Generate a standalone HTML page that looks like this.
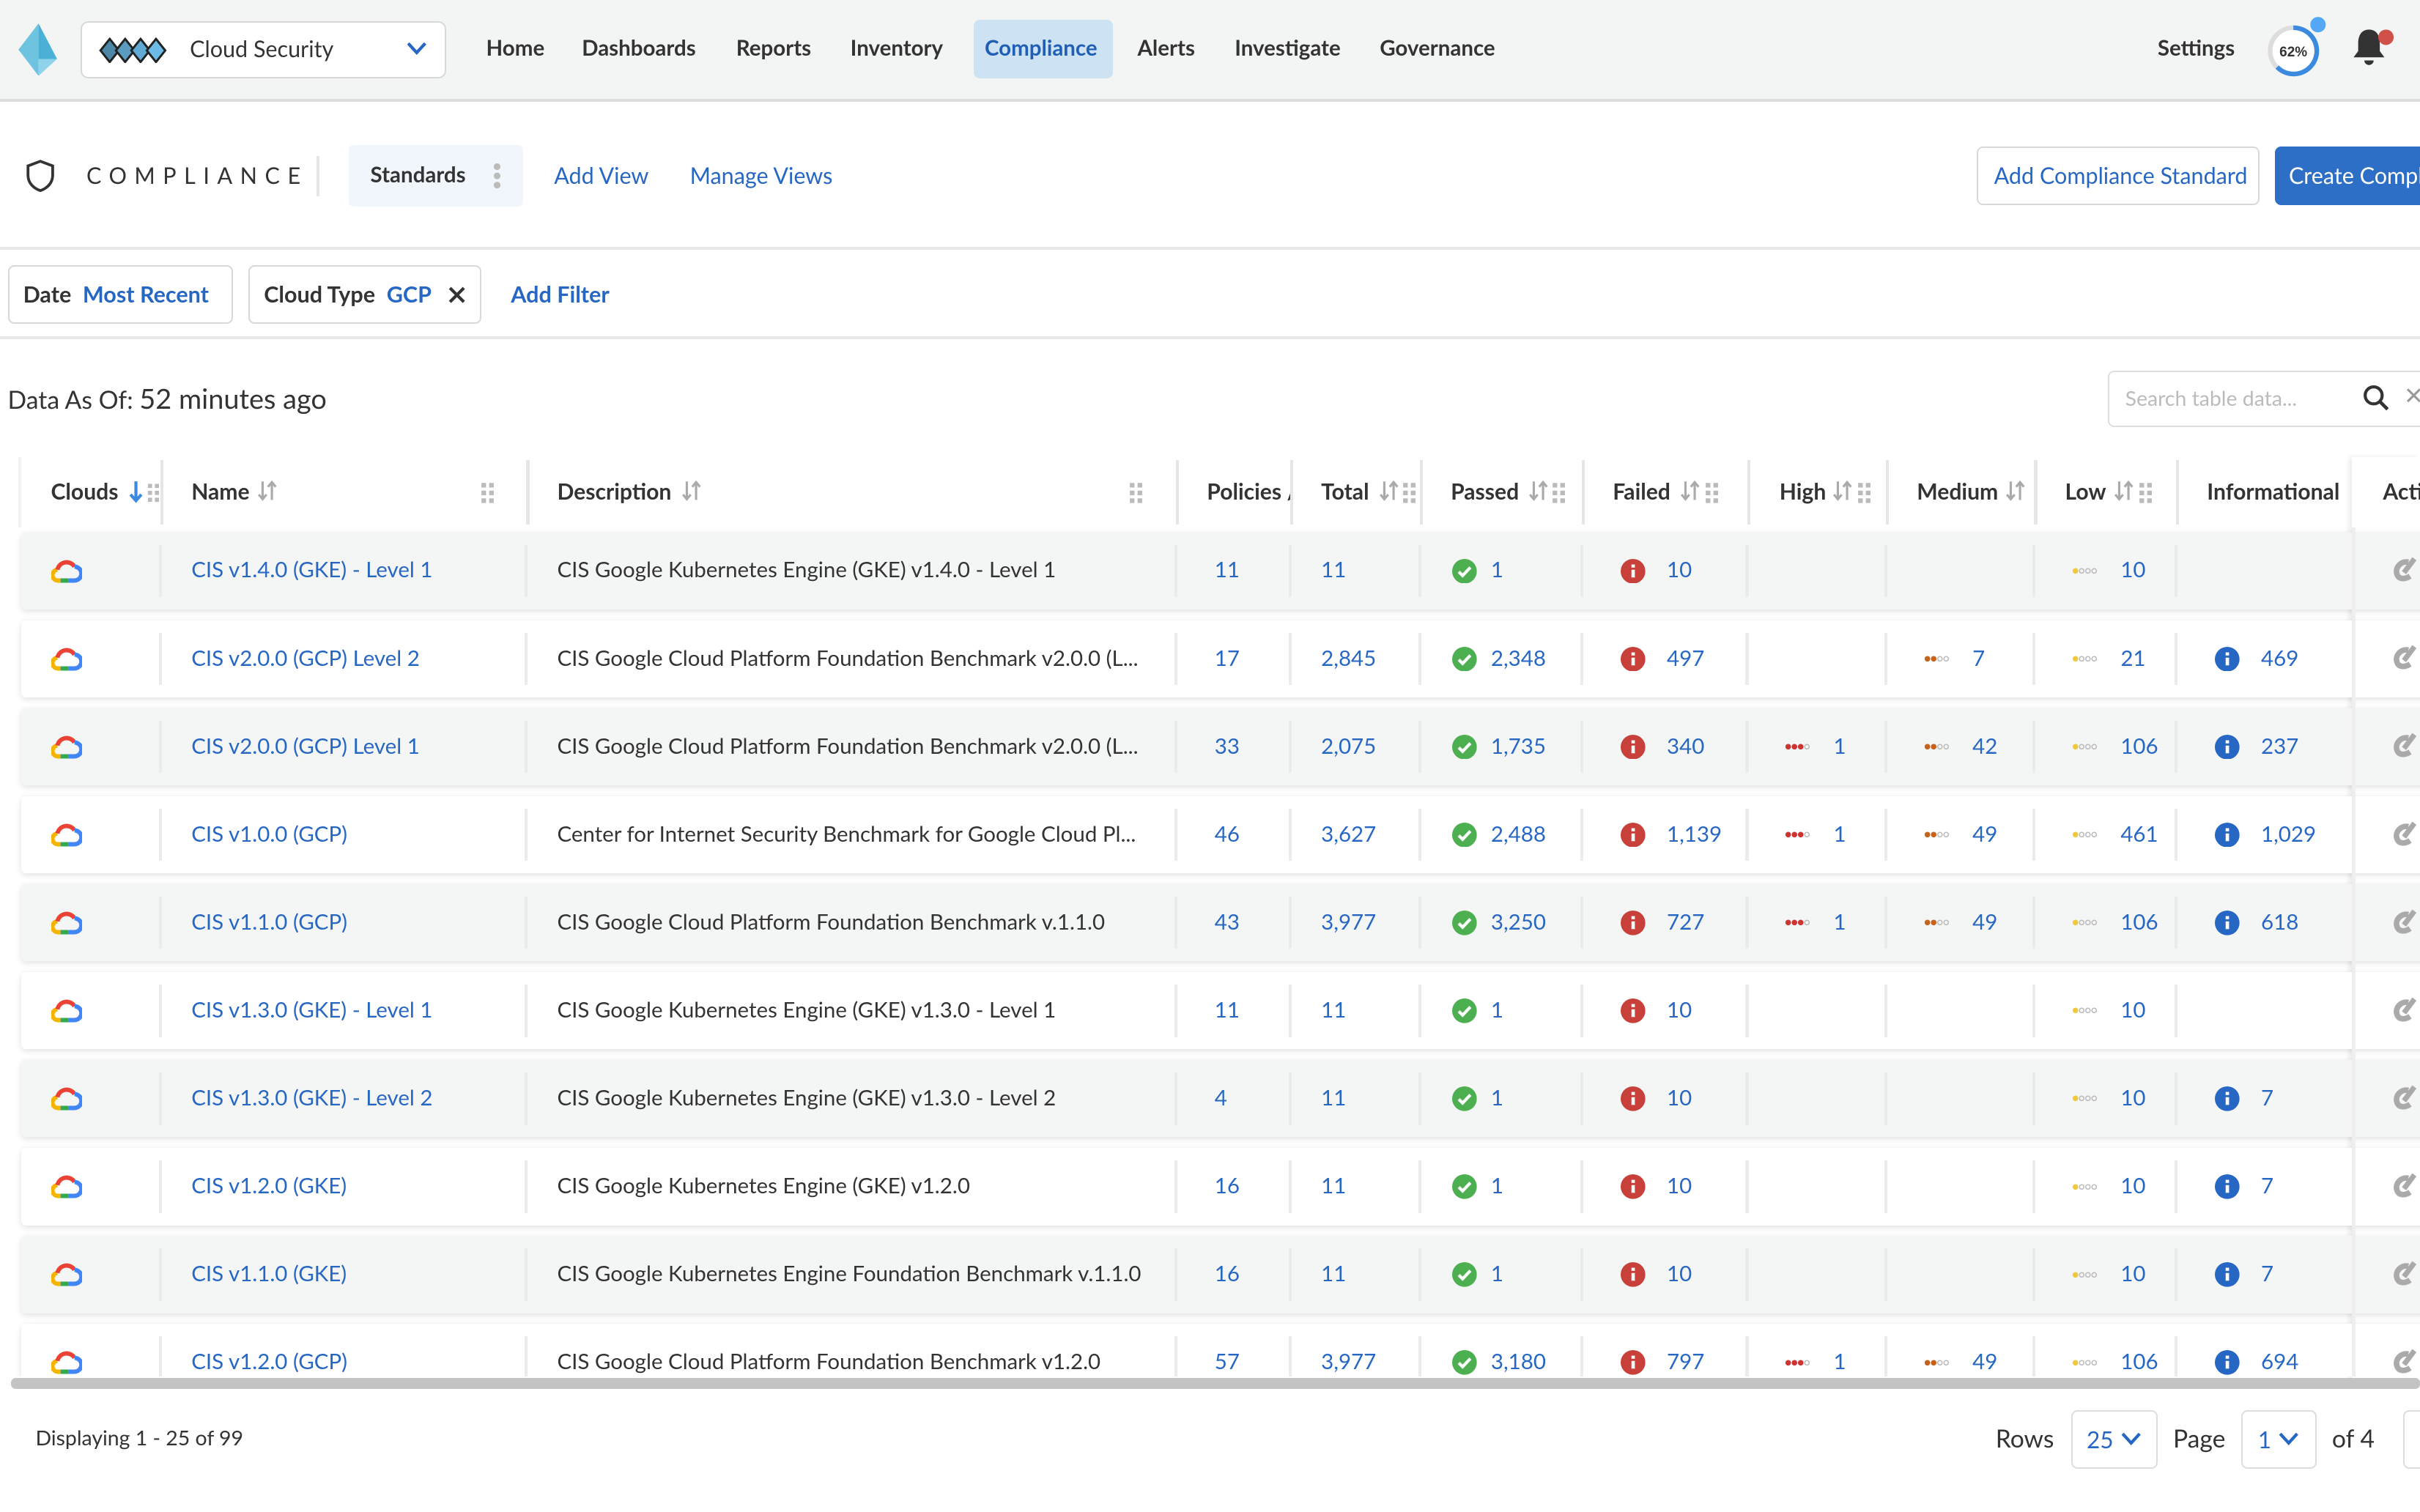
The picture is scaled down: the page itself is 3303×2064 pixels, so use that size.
<!DOCTYPE html>
<html><head><meta charset="utf-8">
<style>
*{box-sizing:border-box;margin:0;padding:0}
html,body{width:3303px;height:2064px;overflow:hidden;background:#fff}
#w{position:absolute;left:0;top:0;width:1568px;height:980px;zoom:2.1065;font-family:"Lato","Liberation Sans",sans-serif;color:#333;font-size:13.5px;overflow:hidden}
.a{position:absolute;white-space:nowrap}
.top{position:absolute;left:0;top:0;width:1568px;height:66px;background:#f3f4f4;border-bottom:2px solid #dcdcdc}
.nav{position:absolute;top:23px;font-weight:bold;font-size:14px;color:#333}
.blue{color:#2767c4}
.row{position:absolute;left:14px;width:1560px;height:50px;box-shadow:0 1px 4px rgba(0,0,0,.12);border-radius:3px;font-size:14px}
.g{background:#f4f5f5}.wh{background:#fff}
.row .a{top:16px}
.sep{position:absolute;top:8px;width:2px;height:34px;background:#ebebeb}
.hd{position:absolute;top:310px;font-weight:bold;font-size:14.3px;color:#333;white-space:nowrap}
.hs{position:absolute;top:298px;width:2px;height:42px;background:#e6e6e6}
svg.i{position:absolute}
</style></head><body><div id="w">
<svg width="0" height="0" style="position:absolute">
<defs>
<symbol id="gc" viewBox="0 0 20 16"><path d="M6 14H4.5A3.5 3.5 0 0 1 4 7" fill="none" stroke="#f4b400" stroke-width="2.8"/><path d="M4 7A6 6 0 0 1 15 5" fill="none" stroke="#ea4335" stroke-width="2.8"/><path d="M15 5A4.5 4.5 0 0 1 15 14H11" fill="none" stroke="#4285f4" stroke-width="2.8"/><path d="M11 14H6" fill="none" stroke="#34a853" stroke-width="2.8"/></symbol>
<symbol id="ok" viewBox="0 0 16 16"><circle cx="8" cy="8" r="8" fill="#4caf50"/><path d="M4.3 8.3l2.5 2.5 5-5.3" fill="none" stroke="#fff" stroke-width="2"/></symbol>
<symbol id="fl" viewBox="0 0 16 16"><circle cx="8" cy="8" r="8" fill="#c8403a"/><rect x="7" y="7" width="2.2" height="5" fill="#fff"/><rect x="7" y="3.6" width="2.2" height="2" fill="#fff"/></symbol>
<symbol id="in" viewBox="0 0 16 16"><circle cx="8" cy="8" r="8" fill="#2767c4"/><rect x="7" y="7" width="2.2" height="5" fill="#fff"/><rect x="7" y="3.6" width="2.2" height="2" fill="#fff"/></symbol>
<symbol id="d3" viewBox="0 0 20 6"><circle cx="3" cy="3" r="2" fill="#c33"/><circle cx="7.5" cy="3" r="2" fill="#c33"/><circle cx="12" cy="3" r="2" fill="#c33"/><circle cx="16.5" cy="3" r="1.6" fill="none" stroke="#bbb" stroke-width=".8"/></symbol>
<symbol id="d2" viewBox="0 0 20 6"><circle cx="3" cy="3" r="2" fill="#c8621b"/><circle cx="7.5" cy="3" r="2" fill="#c8621b"/><circle cx="12" cy="3" r="1.6" fill="none" stroke="#bbb" stroke-width=".8"/><circle cx="16.5" cy="3" r="1.6" fill="none" stroke="#bbb" stroke-width=".8"/></symbol>
<symbol id="d1" viewBox="0 0 20 6"><circle cx="3" cy="3" r="2" fill="#f0c93a"/><circle cx="7.5" cy="3" r="1.6" fill="none" stroke="#bbb" stroke-width=".8"/><circle cx="12" cy="3" r="1.6" fill="none" stroke="#bbb" stroke-width=".8"/><circle cx="16.5" cy="3" r="1.6" fill="none" stroke="#bbb" stroke-width=".8"/></symbol>
<symbol id="ac" viewBox="0 0 16 16"><path d="M11 4C7 3 3 7 4.5 11c1 3 4.5 3 7.5 1" fill="none" stroke="#aaa" stroke-width="3.2"/><path d="M8.5 10l6-8" stroke="#aaa" stroke-width="3"/></symbol>
<symbol id="so" viewBox="0 0 14 16"><path d="M4 2v11M1.5 10.5L4 13.5 6.5 10.5" fill="none" stroke="#aaa" stroke-width="1.5"/><path d="M10 14V3M7.5 5.5L10 2.5 12.5 5.5" fill="none" stroke="#aaa" stroke-width="1.5"/></symbol>
<symbol id="gr" viewBox="0 0 10 16"><g fill="#bbb"><rect x="1" y="2" width="3" height="3"/><rect x="6" y="2" width="3" height="3"/><rect x="1" y="7" width="3" height="3"/><rect x="6" y="7" width="3" height="3"/><rect x="1" y="12" width="3" height="3"/><rect x="6" y="12" width="3" height="3"/></g></symbol>
</defs></svg>

<div class="top"></div>
<svg class="i" style="left:10px;top:15px" width="27" height="34" viewBox="0 0 27 34"><path d="M15 0L2 17l13 17z" fill="#6ec3e0"/><path d="M15 0l12 23H15z" fill="#4ab0d6"/><path d="M15 23h12l-12 11z" fill="#8fd3ea"/></svg>
<div class="a" style="left:52px;top:14px;width:237px;height:37px;background:#fff;border:1px solid #d8d8d8;border-radius:5px"></div>
<svg class="i" style="left:64px;top:24px" width="52" height="17" viewBox="0 0 52 17"><g stroke="#222" stroke-width="1.4"><path d="M7 1l6 7.5-6 7.5-6-7.5z" fill="#4c87a8"/><path d="M17 1l6 7.5-6 7.5-6-7.5z" fill="#5b9cc0"/><path d="M27 1l6 7.5-6 7.5-6-7.5z" fill="#62aad6"/><path d="M37 1l6 7.5-6 7.5-6-7.5z" fill="#6cbbe6"/></g></svg>
<div class="a" style="left:123px;top:23px;font-size:14.5px">Cloud Security</div>
<svg class="i" style="left:263px;top:26px" width="14" height="10" viewBox="0 0 14 10"><path d="M1.5 2l5.5 6 5.5-6" fill="none" stroke="#2767c4" stroke-width="2"/></svg>
<div class="nav" style="left:315px">Home</div>
<div class="nav" style="left:377px">Dashboards</div>
<div class="nav" style="left:477px">Reports</div>
<div class="nav" style="left:551px">Inventory</div>
<div class="a" style="left:631px;top:13px;width:90px;height:38px;background:#cde2f3;border-radius:4px"></div>
<div class="nav" style="left:638px;color:#1f5fb5">Compliance</div>
<div class="nav" style="left:737px">Alerts</div>
<div class="nav" style="left:800px">Investigate</div>
<div class="nav" style="left:894px">Governance</div>
<div class="nav" style="left:1398px">Settings</div>
<svg class="i" style="left:1466px;top:10px" width="46" height="42" viewBox="0 0 46 42"><circle cx="20" cy="23" r="15" fill="#fff" stroke="#ddd" stroke-width="3"/><path d="M20 8A15 15 0 1 1 9.5 33.5" fill="none" stroke="#3a8ae0" stroke-width="3"/><circle cx="36" cy="6" r="5" fill="#55a8f5"/><text x="20" y="26.5" font-size="9" font-weight="bold" text-anchor="middle" font-family="Liberation Sans,sans-serif" fill="#333">62%</text></svg>
<svg class="i" style="left:1522px;top:16px" width="32" height="30" viewBox="0 0 32 30"><path d="M13 3c-5 0-7 4-7 9v5l-3 4h20l-3-4v-5c0-5-2-9-7-9z" fill="#333"/><path d="M10 23a3 3 0 0 0 6 0z" fill="#333"/><circle cx="24" cy="8" r="5" fill="#d0504a"/></svg>

<svg class="i" style="left:16px;top:103px" width="20" height="22" viewBox="0 0 20 22"><path d="M10 1.5L2 4.5v6c0 5 3.5 8.5 8 10 4.5-1.5 8-5 8-10v-6z" fill="none" stroke="#333" stroke-width="1.8"/></svg>
<div class="a" style="left:56px;top:105px;font-size:14.5px;letter-spacing:5px">COMPLIANCE</div>
<div class="a" style="left:205px;top:101px;width:2px;height:26px;background:#e6e6e6"></div>
<div class="a" style="left:226px;top:94px;width:113px;height:40px;background:#f0f6fb;border-radius:3px"></div>
<div class="a" style="left:240px;top:105px;font-weight:bold;font-size:14px">Standards</div>
<div class="a" style="left:320px;top:106px;width:4px;height:4px;border-radius:2px;background:#bbb;box-shadow:0 6px 0 #bbb,0 12px 0 #bbb"></div>
<div class="a blue" style="left:359px;top:105px;font-size:14.5px">Add View</div>
<div class="a blue" style="left:447px;top:105px;font-size:14.5px">Manage Views</div>
<div class="a" style="left:1281px;top:95px;width:183px;height:38px;border:1px solid #d8d8d8;border-radius:4px;background:#fff"></div>
<div class="a blue" style="left:1292px;top:105px;font-size:14.5px">Add Compliance Standard</div>
<div class="a" style="left:1474px;top:95px;width:110px;height:38px;background:#2d6fc6;border-radius:4px"></div>
<div class="a" style="left:1483px;top:105px;font-size:14.5px;color:#fff">Create Compliance</div>
<div class="a" style="left:0;top:160px;width:1568px;height:2px;background:#e8e8e8"></div>

<div class="a" style="left:5px;top:172px;width:146px;height:38px;border:1px solid #d8d8d8;border-radius:4px"></div>
<div class="a" style="left:15px;top:182px;font-size:14.5px"><b>Date</b>&nbsp; <b class="blue">Most Recent</b></div>
<div class="a" style="left:161px;top:172px;width:151px;height:38px;border:1px solid #d8d8d8;border-radius:4px"></div>
<div class="a" style="left:171px;top:182px;font-size:14.5px"><b>Cloud Type</b>&nbsp; <b class="blue">GCP</b></div>
<svg class="i" style="left:290px;top:185px" width="12" height="12" viewBox="0 0 12 12"><path d="M1.5 1.5l9 9M10.5 1.5l-9 9" stroke="#333" stroke-width="2"/></svg>
<div class="a blue" style="left:331px;top:182px;font-size:14.5px;font-weight:bold">Add Filter</div>
<div class="a" style="left:0;top:218px;width:1568px;height:2px;background:#e8e8e8"></div>

<div class="a" style="left:5px;top:248px;font-size:16px">Data As Of: <span style="font-size:18px">52 minutes ago</span></div>
<div class="a" style="left:1366px;top:240px;width:210px;height:37px;border:1px solid #ddd;border-radius:4px"></div>
<div class="a" style="left:1377px;top:250px;font-size:13.5px;color:#bbb">Search table data...</div>
<svg class="i" style="left:1531px;top:249px" width="40" height="18" viewBox="0 0 40 18"><circle cx="7" cy="7" r="5.5" fill="none" stroke="#333" stroke-width="2"/><path d="M11 11l5 5" stroke="#333" stroke-width="2.2"/><path d="M29 3l8 8M37 3l-8 8" stroke="#999" stroke-width="1.5"/></svg>

<div class="a" style="left:12px;top:296px;width:2px;height:46px;background:#f2f2f2"></div>
<div class="hd" style="left:33px">Clouds</div>
<svg class="i" style="left:83px;top:311px" width="10" height="16" viewBox="0 0 10 16"><path d="M5 1v12M1.5 9.5L5 13.5 8.5 9.5" fill="none" stroke="#3a8ae0" stroke-width="2"/></svg>
<svg class="i" style="left:95px;top:311px" width="9" height="16"><use href="#gr"/></svg>
<div class="hs" style="left:104px"></div>
<div class="hd" style="left:124px">Name</div><svg class="i" style="left:166px;top:310px" width="14" height="16"><use href="#so"/></svg><svg class="i" style="left:311px;top:311px" width="10" height="16"><use href="#gr"/></svg>
<div class="hs" style="left:341px"></div>
<div class="hd" style="left:361px">Description</div><svg class="i" style="left:441px;top:310px" width="14" height="16"><use href="#so"/></svg><svg class="i" style="left:731px;top:311px" width="10" height="16"><use href="#gr"/></svg>
<div class="hs" style="left:762px"></div>
<div class="hd" style="left:782px;width:54px;overflow:hidden">Policies /</div>
<div class="hs" style="left:836px"></div>
<div class="hd" style="left:856px">Total</div><svg class="i" style="left:893px;top:310px" width="14" height="16"><use href="#so"/></svg><svg class="i" style="left:908px;top:311px" width="10" height="16"><use href="#gr"/></svg>
<div class="hs" style="left:920px"></div>
<div class="hd" style="left:940px">Passed</div><svg class="i" style="left:990px;top:310px" width="14" height="16"><use href="#so"/></svg><svg class="i" style="left:1005px;top:311px" width="10" height="16"><use href="#gr"/></svg>
<div class="hs" style="left:1025px"></div>
<div class="hd" style="left:1045px">Failed</div><svg class="i" style="left:1088px;top:310px" width="14" height="16"><use href="#so"/></svg><svg class="i" style="left:1104px;top:311px" width="10" height="16"><use href="#gr"/></svg>
<div class="hs" style="left:1132px"></div>
<div class="hd" style="left:1153px">High</div><svg class="i" style="left:1187px;top:310px" width="14" height="16"><use href="#so"/></svg><svg class="i" style="left:1203px;top:311px" width="10" height="16"><use href="#gr"/></svg>
<div class="hs" style="left:1222px"></div>
<div class="hd" style="left:1242px">Medium</div><svg class="i" style="left:1299px;top:310px" width="14" height="16"><use href="#so"/></svg>
<div class="hs" style="left:1318px"></div>
<div class="hd" style="left:1338px">Low</div><svg class="i" style="left:1369px;top:310px" width="14" height="16"><use href="#so"/></svg><svg class="i" style="left:1385px;top:311px" width="10" height="16"><use href="#gr"/></svg>
<div class="hs" style="left:1410px"></div>
<div class="hd" style="left:1430px">Informational</div>
<div class="a" style="left:1524px;top:296px;width:44px;height:600px;background:#fff;box-shadow:-2px 0 3px rgba(0,0,0,.08)"></div>
<div class="hd" style="left:1544px">Acti</div>

<div class="a" style="left:7px;top:893px;width:1561px;height:7px;background:#c4c4c4;border-radius:3px"></div>

<div class="a" style="left:23px;top:924px;font-size:13.5px">Displaying 1 - 25 of 99</div>
<div class="a" style="left:1293px;top:923px;font-size:16px">Rows</div>
<div class="a" style="left:1342px;top:914px;width:56px;height:38px;border:1px solid #ddd;border-radius:4px"></div>
<div class="a blue" style="left:1352px;top:924px;font-size:15px">25</div>
<svg class="i" style="left:1374px;top:927px" width="14" height="10" viewBox="0 0 14 10"><path d="M1.5 2l5.5 6 5.5-6" fill="none" stroke="#2767c4" stroke-width="2"/></svg>
<div class="a" style="left:1408px;top:923px;font-size:16px">Page</div>
<div class="a" style="left:1452px;top:914px;width:49px;height:38px;border:1px solid #ddd;border-radius:4px"></div>
<div class="a blue" style="left:1463px;top:924px;font-size:15px">1</div>
<svg class="i" style="left:1476px;top:927px" width="14" height="10" viewBox="0 0 14 10"><path d="M1.5 2l5.5 6 5.5-6" fill="none" stroke="#2767c4" stroke-width="2"/></svg>
<div class="a" style="left:1511px;top:923px;font-size:16px">of 4</div>
<div class="a" style="left:1557px;top:914px;width:20px;height:38px;border:1px solid #ddd;border-radius:4px"></div>

<div style="position:absolute;left:0;top:0;width:1568px;height:892px;overflow:hidden">
<div class="row g" style="top:345px"><svg class="i" style="left:19px;top:17px" width="20" height="16"><use href="#gc"/></svg><i class="sep" style="left:89px"></i><span class="a blue" style="left:110px">CIS v1.4.0 (GKE) - Level 1</span><i class="sep" style="left:326px"></i><span class="a" style="left:347px">CIS Google Kubernetes Engine (GKE) v1.4.0 - Level 1</span><i class="sep" style="left:747px"></i><span class="a blue" style="left:773px">11</span><i class="sep" style="left:821px"></i><span class="a blue" style="left:842px">11</span><i class="sep" style="left:905px"></i><svg class="i" style="left:927px;top:17px" width="16" height="16"><use href="#ok"/></svg><span class="a blue" style="left:952px">1</span><i class="sep" style="left:1010px"></i><svg class="i" style="left:1036px;top:17px" width="16" height="16"><use href="#fl"/></svg><span class="a blue" style="left:1066px">10</span><i class="sep" style="left:1117px"></i><i class="sep" style="left:1207px"></i><i class="sep" style="left:1303px"></i><svg class="i" style="left:1328px;top:22px" width="18" height="6"><use href="#d1"/></svg><span class="a blue" style="left:1360px">10</span><i class="sep" style="left:1395px"></i><svg class="i" style="left:1534px;top:15px" width="18" height="18"><use href="#ac"/></svg></div>

<div class="row wh" style="top:402px"><svg class="i" style="left:19px;top:17px" width="20" height="16"><use href="#gc"/></svg><i class="sep" style="left:89px"></i><span class="a blue" style="left:110px">CIS v2.0.0 (GCP) Level 2</span><i class="sep" style="left:326px"></i><span class="a" style="left:347px">CIS Google Cloud Platform Foundation Benchmark v2.0.0 (L...</span><i class="sep" style="left:747px"></i><span class="a blue" style="left:773px">17</span><i class="sep" style="left:821px"></i><span class="a blue" style="left:842px">2,845</span><i class="sep" style="left:905px"></i><svg class="i" style="left:927px;top:17px" width="16" height="16"><use href="#ok"/></svg><span class="a blue" style="left:952px">2,348</span><i class="sep" style="left:1010px"></i><svg class="i" style="left:1036px;top:17px" width="16" height="16"><use href="#fl"/></svg><span class="a blue" style="left:1066px">497</span><i class="sep" style="left:1117px"></i><i class="sep" style="left:1207px"></i><svg class="i" style="left:1232px;top:22px" width="18" height="6"><use href="#d2"/></svg><span class="a blue" style="left:1264px">7</span><i class="sep" style="left:1303px"></i><svg class="i" style="left:1328px;top:22px" width="18" height="6"><use href="#d1"/></svg><span class="a blue" style="left:1360px">21</span><i class="sep" style="left:1395px"></i><svg class="i" style="left:1421px;top:17px" width="16" height="16"><use href="#in"/></svg><span class="a blue" style="left:1451px">469</span><svg class="i" style="left:1534px;top:15px" width="18" height="18"><use href="#ac"/></svg></div>

<div class="row g" style="top:459px"><svg class="i" style="left:19px;top:17px" width="20" height="16"><use href="#gc"/></svg><i class="sep" style="left:89px"></i><span class="a blue" style="left:110px">CIS v2.0.0 (GCP) Level 1</span><i class="sep" style="left:326px"></i><span class="a" style="left:347px">CIS Google Cloud Platform Foundation Benchmark v2.0.0 (L...</span><i class="sep" style="left:747px"></i><span class="a blue" style="left:773px">33</span><i class="sep" style="left:821px"></i><span class="a blue" style="left:842px">2,075</span><i class="sep" style="left:905px"></i><svg class="i" style="left:927px;top:17px" width="16" height="16"><use href="#ok"/></svg><span class="a blue" style="left:952px">1,735</span><i class="sep" style="left:1010px"></i><svg class="i" style="left:1036px;top:17px" width="16" height="16"><use href="#fl"/></svg><span class="a blue" style="left:1066px">340</span><i class="sep" style="left:1117px"></i><svg class="i" style="left:1142px;top:22px" width="18" height="6"><use href="#d3"/></svg><span class="a blue" style="left:1174px">1</span><i class="sep" style="left:1207px"></i><svg class="i" style="left:1232px;top:22px" width="18" height="6"><use href="#d2"/></svg><span class="a blue" style="left:1264px">42</span><i class="sep" style="left:1303px"></i><svg class="i" style="left:1328px;top:22px" width="18" height="6"><use href="#d1"/></svg><span class="a blue" style="left:1360px">106</span><i class="sep" style="left:1395px"></i><svg class="i" style="left:1421px;top:17px" width="16" height="16"><use href="#in"/></svg><span class="a blue" style="left:1451px">237</span><svg class="i" style="left:1534px;top:15px" width="18" height="18"><use href="#ac"/></svg></div>

<div class="row wh" style="top:516px"><svg class="i" style="left:19px;top:17px" width="20" height="16"><use href="#gc"/></svg><i class="sep" style="left:89px"></i><span class="a blue" style="left:110px">CIS v1.0.0 (GCP)</span><i class="sep" style="left:326px"></i><span class="a" style="left:347px">Center for Internet Security Benchmark for Google Cloud Pl...</span><i class="sep" style="left:747px"></i><span class="a blue" style="left:773px">46</span><i class="sep" style="left:821px"></i><span class="a blue" style="left:842px">3,627</span><i class="sep" style="left:905px"></i><svg class="i" style="left:927px;top:17px" width="16" height="16"><use href="#ok"/></svg><span class="a blue" style="left:952px">2,488</span><i class="sep" style="left:1010px"></i><svg class="i" style="left:1036px;top:17px" width="16" height="16"><use href="#fl"/></svg><span class="a blue" style="left:1066px">1,139</span><i class="sep" style="left:1117px"></i><svg class="i" style="left:1142px;top:22px" width="18" height="6"><use href="#d3"/></svg><span class="a blue" style="left:1174px">1</span><i class="sep" style="left:1207px"></i><svg class="i" style="left:1232px;top:22px" width="18" height="6"><use href="#d2"/></svg><span class="a blue" style="left:1264px">49</span><i class="sep" style="left:1303px"></i><svg class="i" style="left:1328px;top:22px" width="18" height="6"><use href="#d1"/></svg><span class="a blue" style="left:1360px">461</span><i class="sep" style="left:1395px"></i><svg class="i" style="left:1421px;top:17px" width="16" height="16"><use href="#in"/></svg><span class="a blue" style="left:1451px">1,029</span><svg class="i" style="left:1534px;top:15px" width="18" height="18"><use href="#ac"/></svg></div>

<div class="row g" style="top:573px"><svg class="i" style="left:19px;top:17px" width="20" height="16"><use href="#gc"/></svg><i class="sep" style="left:89px"></i><span class="a blue" style="left:110px">CIS v1.1.0 (GCP)</span><i class="sep" style="left:326px"></i><span class="a" style="left:347px">CIS Google Cloud Platform Foundation Benchmark v.1.1.0</span><i class="sep" style="left:747px"></i><span class="a blue" style="left:773px">43</span><i class="sep" style="left:821px"></i><span class="a blue" style="left:842px">3,977</span><i class="sep" style="left:905px"></i><svg class="i" style="left:927px;top:17px" width="16" height="16"><use href="#ok"/></svg><span class="a blue" style="left:952px">3,250</span><i class="sep" style="left:1010px"></i><svg class="i" style="left:1036px;top:17px" width="16" height="16"><use href="#fl"/></svg><span class="a blue" style="left:1066px">727</span><i class="sep" style="left:1117px"></i><svg class="i" style="left:1142px;top:22px" width="18" height="6"><use href="#d3"/></svg><span class="a blue" style="left:1174px">1</span><i class="sep" style="left:1207px"></i><svg class="i" style="left:1232px;top:22px" width="18" height="6"><use href="#d2"/></svg><span class="a blue" style="left:1264px">49</span><i class="sep" style="left:1303px"></i><svg class="i" style="left:1328px;top:22px" width="18" height="6"><use href="#d1"/></svg><span class="a blue" style="left:1360px">106</span><i class="sep" style="left:1395px"></i><svg class="i" style="left:1421px;top:17px" width="16" height="16"><use href="#in"/></svg><span class="a blue" style="left:1451px">618</span><svg class="i" style="left:1534px;top:15px" width="18" height="18"><use href="#ac"/></svg></div>

<div class="row wh" style="top:630px"><svg class="i" style="left:19px;top:17px" width="20" height="16"><use href="#gc"/></svg><i class="sep" style="left:89px"></i><span class="a blue" style="left:110px">CIS v1.3.0 (GKE) - Level 1</span><i class="sep" style="left:326px"></i><span class="a" style="left:347px">CIS Google Kubernetes Engine (GKE) v1.3.0 - Level 1</span><i class="sep" style="left:747px"></i><span class="a blue" style="left:773px">11</span><i class="sep" style="left:821px"></i><span class="a blue" style="left:842px">11</span><i class="sep" style="left:905px"></i><svg class="i" style="left:927px;top:17px" width="16" height="16"><use href="#ok"/></svg><span class="a blue" style="left:952px">1</span><i class="sep" style="left:1010px"></i><svg class="i" style="left:1036px;top:17px" width="16" height="16"><use href="#fl"/></svg><span class="a blue" style="left:1066px">10</span><i class="sep" style="left:1117px"></i><i class="sep" style="left:1207px"></i><i class="sep" style="left:1303px"></i><svg class="i" style="left:1328px;top:22px" width="18" height="6"><use href="#d1"/></svg><span class="a blue" style="left:1360px">10</span><i class="sep" style="left:1395px"></i><svg class="i" style="left:1534px;top:15px" width="18" height="18"><use href="#ac"/></svg></div>

<div class="row g" style="top:687px"><svg class="i" style="left:19px;top:17px" width="20" height="16"><use href="#gc"/></svg><i class="sep" style="left:89px"></i><span class="a blue" style="left:110px">CIS v1.3.0 (GKE) - Level 2</span><i class="sep" style="left:326px"></i><span class="a" style="left:347px">CIS Google Kubernetes Engine (GKE) v1.3.0 - Level 2</span><i class="sep" style="left:747px"></i><span class="a blue" style="left:773px">4</span><i class="sep" style="left:821px"></i><span class="a blue" style="left:842px">11</span><i class="sep" style="left:905px"></i><svg class="i" style="left:927px;top:17px" width="16" height="16"><use href="#ok"/></svg><span class="a blue" style="left:952px">1</span><i class="sep" style="left:1010px"></i><svg class="i" style="left:1036px;top:17px" width="16" height="16"><use href="#fl"/></svg><span class="a blue" style="left:1066px">10</span><i class="sep" style="left:1117px"></i><i class="sep" style="left:1207px"></i><i class="sep" style="left:1303px"></i><svg class="i" style="left:1328px;top:22px" width="18" height="6"><use href="#d1"/></svg><span class="a blue" style="left:1360px">10</span><i class="sep" style="left:1395px"></i><svg class="i" style="left:1421px;top:17px" width="16" height="16"><use href="#in"/></svg><span class="a blue" style="left:1451px">7</span><svg class="i" style="left:1534px;top:15px" width="18" height="18"><use href="#ac"/></svg></div>

<div class="row wh" style="top:744px"><svg class="i" style="left:19px;top:17px" width="20" height="16"><use href="#gc"/></svg><i class="sep" style="left:89px"></i><span class="a blue" style="left:110px">CIS v1.2.0 (GKE)</span><i class="sep" style="left:326px"></i><span class="a" style="left:347px">CIS Google Kubernetes Engine (GKE) v1.2.0</span><i class="sep" style="left:747px"></i><span class="a blue" style="left:773px">16</span><i class="sep" style="left:821px"></i><span class="a blue" style="left:842px">11</span><i class="sep" style="left:905px"></i><svg class="i" style="left:927px;top:17px" width="16" height="16"><use href="#ok"/></svg><span class="a blue" style="left:952px">1</span><i class="sep" style="left:1010px"></i><svg class="i" style="left:1036px;top:17px" width="16" height="16"><use href="#fl"/></svg><span class="a blue" style="left:1066px">10</span><i class="sep" style="left:1117px"></i><i class="sep" style="left:1207px"></i><i class="sep" style="left:1303px"></i><svg class="i" style="left:1328px;top:22px" width="18" height="6"><use href="#d1"/></svg><span class="a blue" style="left:1360px">10</span><i class="sep" style="left:1395px"></i><svg class="i" style="left:1421px;top:17px" width="16" height="16"><use href="#in"/></svg><span class="a blue" style="left:1451px">7</span><svg class="i" style="left:1534px;top:15px" width="18" height="18"><use href="#ac"/></svg></div>

<div class="row g" style="top:801px"><svg class="i" style="left:19px;top:17px" width="20" height="16"><use href="#gc"/></svg><i class="sep" style="left:89px"></i><span class="a blue" style="left:110px">CIS v1.1.0 (GKE)</span><i class="sep" style="left:326px"></i><span class="a" style="left:347px">CIS Google Kubernetes Engine Foundation Benchmark v.1.1.0</span><i class="sep" style="left:747px"></i><span class="a blue" style="left:773px">16</span><i class="sep" style="left:821px"></i><span class="a blue" style="left:842px">11</span><i class="sep" style="left:905px"></i><svg class="i" style="left:927px;top:17px" width="16" height="16"><use href="#ok"/></svg><span class="a blue" style="left:952px">1</span><i class="sep" style="left:1010px"></i><svg class="i" style="left:1036px;top:17px" width="16" height="16"><use href="#fl"/></svg><span class="a blue" style="left:1066px">10</span><i class="sep" style="left:1117px"></i><i class="sep" style="left:1207px"></i><i class="sep" style="left:1303px"></i><svg class="i" style="left:1328px;top:22px" width="18" height="6"><use href="#d1"/></svg><span class="a blue" style="left:1360px">10</span><i class="sep" style="left:1395px"></i><svg class="i" style="left:1421px;top:17px" width="16" height="16"><use href="#in"/></svg><span class="a blue" style="left:1451px">7</span><svg class="i" style="left:1534px;top:15px" width="18" height="18"><use href="#ac"/></svg></div>

<div class="row wh" style="top:858px"><svg class="i" style="left:19px;top:17px" width="20" height="16"><use href="#gc"/></svg><i class="sep" style="left:89px"></i><span class="a blue" style="left:110px">CIS v1.2.0 (GCP)</span><i class="sep" style="left:326px"></i><span class="a" style="left:347px">CIS Google Cloud Platform Foundation Benchmark v1.2.0</span><i class="sep" style="left:747px"></i><span class="a blue" style="left:773px">57</span><i class="sep" style="left:821px"></i><span class="a blue" style="left:842px">3,977</span><i class="sep" style="left:905px"></i><svg class="i" style="left:927px;top:17px" width="16" height="16"><use href="#ok"/></svg><span class="a blue" style="left:952px">3,180</span><i class="sep" style="left:1010px"></i><svg class="i" style="left:1036px;top:17px" width="16" height="16"><use href="#fl"/></svg><span class="a blue" style="left:1066px">797</span><i class="sep" style="left:1117px"></i><svg class="i" style="left:1142px;top:22px" width="18" height="6"><use href="#d3"/></svg><span class="a blue" style="left:1174px">1</span><i class="sep" style="left:1207px"></i><svg class="i" style="left:1232px;top:22px" width="18" height="6"><use href="#d2"/></svg><span class="a blue" style="left:1264px">49</span><i class="sep" style="left:1303px"></i><svg class="i" style="left:1328px;top:22px" width="18" height="6"><use href="#d1"/></svg><span class="a blue" style="left:1360px">106</span><i class="sep" style="left:1395px"></i><svg class="i" style="left:1421px;top:17px" width="16" height="16"><use href="#in"/></svg><span class="a blue" style="left:1451px">694</span><svg class="i" style="left:1534px;top:15px" width="18" height="18"><use href="#ac"/></svg></div>
</div>
<div class="a" style="left:1524px;top:342px;width:2px;height:550px;background:#eee"></div>
</div></body></html>
